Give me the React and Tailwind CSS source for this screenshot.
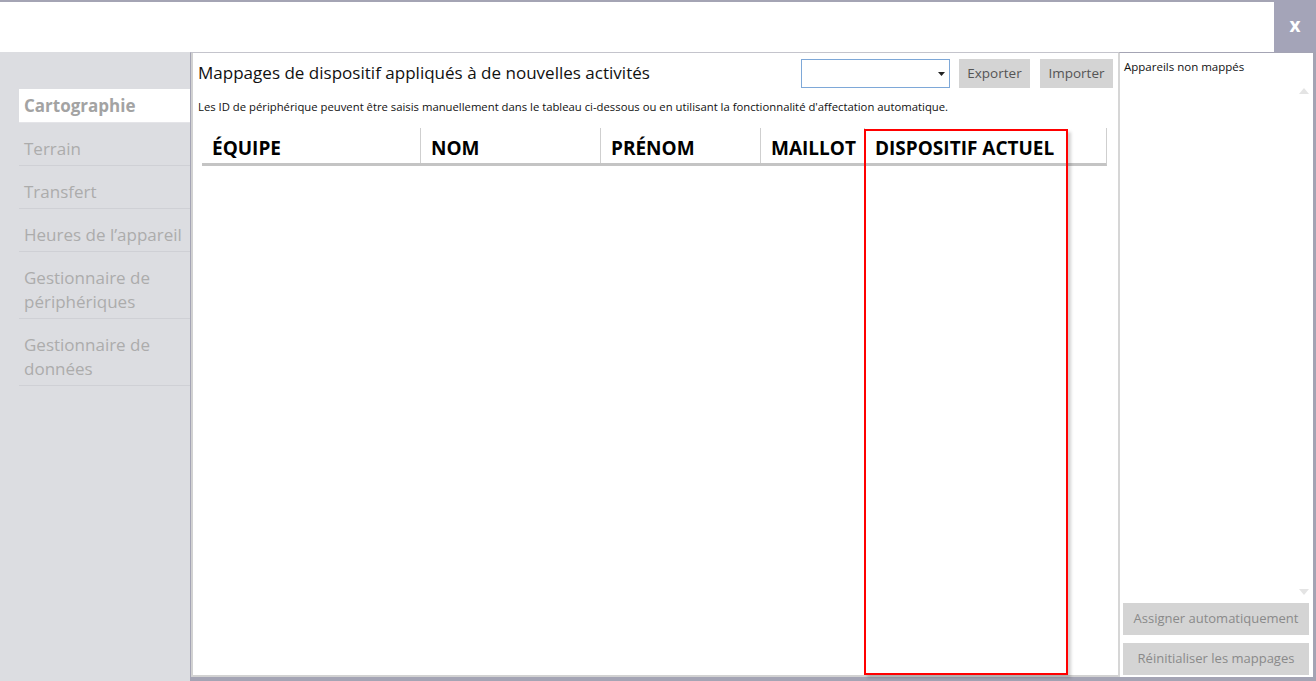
import React from "react";

const font = { fontFamily: '"Open Sans", "Noto Sans", sans-serif' };

function NavItem({ children, active }) {
  if (active) {
    return (
      <div className="bg-white h-[34px] flex items-center pl-[5px] text-[17px] font-bold text-[#a3a3a3] border-b border-[#e4e4e8]">
        {children}
      </div>
    );
  }
  return (
    <div className="pt-[14px] pb-[4px] pl-[5px] text-[17px] leading-[24px] text-[#acacac] border-b border-[#cfd0d5]">
      {children}
    </div>
  );
}

export default function App() {
  return (
    <div className="w-[1316px] h-[681px] bg-white flex flex-col overflow-hidden" style={font}>
      {/* top bar */}
      <div className="h-[52px] flex shrink-0">
        <div className="flex-1 border-t-2 border-[#a4a4b4] bg-white" />
        <div className="w-[42px] h-full bg-[#a4a4b8] flex items-center justify-center text-white font-bold text-[19px] pb-[2px]">
          x
        </div>
      </div>

      {/* body */}
      <div className="flex-1 flex min-h-0">
        {/* sidebar */}
        <div className="w-[190px] shrink-0 bg-[#dcdde1] pt-[37px] pl-[19px]">
          <NavItem active>Cartographie</NavItem>
          <NavItem>Terrain</NavItem>
          <NavItem>Transfert</NavItem>
          <NavItem>Heures de l’appareil</NavItem>
          <NavItem>
            Gestionnaire de
            <br />
            périphériques
          </NavItem>
          <NavItem>
            Gestionnaire de
            <br />
            données
          </NavItem>
        </div>

        {/* main */}
        <div className="w-[928px] shrink-0 border-l border-[#a4a4b4] border-t border-t-[#c4c4cc] flex flex-col">
          <div className="flex-1 border-l-2 border-[#d2d2d2] border-b-2 border-b-[#d2d2d2] flex flex-col pl-[5px] relative">
            {/* title row */}
            <div className="flex items-start pt-[6px] h-[36px]">
              <div className="flex-1 text-[17.05px] text-[#111] leading-[24px] pt-[2px]">
                Mappages de dispositif appliqués à de nouvelles activités
              </div>
              <div className="w-[149px] h-[29px] border border-[#7ea8d8] bg-white flex items-center justify-end pr-[4px] mr-[9px]">
                <svg width="7" height="4" viewBox="0 0 7 4">
                  <path d="M0 0 L7 0 L3.5 4 Z" fill="#222" />
                </svg>
              </div>
              <div className="w-[71px] h-[29px] bg-[#d4d4d4] flex items-center justify-center text-[13.5px] text-[#555] mr-[10px]">
                Exporter
              </div>
              <div className="w-[73px] h-[29px] bg-[#d4d4d4] flex items-center justify-center text-[13.5px] text-[#555] mr-[5px]">
                Importer
              </div>
            </div>
            {/* subtitle */}
            <div className="text-[11.3px] text-[#111] leading-[16px] mt-[10px] whitespace-nowrap">
              Les ID de périphérique peuvent être saisis manuellement dans le tableau ci-dessous ou en utilisant la fonctionnalité d'affectation automatique.
            </div>
            {/* table header */}
            <div className="mt-[13px] ml-[4px] w-[905px] flex h-[38px] border-b-[3px] border-[#c4c4c4] border-r border-r-[#cfcfcf]">
              <div className="w-[219px] border-r border-[#cfcfcf] pl-[10px] flex items-center text-[19px] font-bold text-black pt-[5px]">ÉQUIPE</div>
              <div className="w-[180px] border-r border-[#cfcfcf] pl-[10px] flex items-center text-[19px] font-bold text-black pt-[5px]">NOM</div>
              <div className="w-[160px] border-r border-[#cfcfcf] pl-[10px] flex items-center text-[19px] font-bold text-black pt-[5px]">PRÉNOM</div>
              <div className="w-[104px] border-r border-[#cfcfcf] pl-[10px] flex items-center text-[19px] font-bold text-black pt-[5px]">MAILLOT</div>
              <div className="flex-1 pl-[10px] flex items-center text-[19px] font-bold text-black pt-[5px]">DISPOSITIF ACTUEL</div>
            </div>
            {/* red highlight overlay */}
            <div className="absolute left-[671px] top-[76px] w-[204px] h-[546px] border-2 border-[#ff0000] shadow-[3px_3px_3px_rgba(0,0,0,0.18)]" />
          </div>
          <div className="h-[4px] bg-[#a4a4b4] shrink-0" />
        </div>

        {/* right panel */}
        <div className="flex-1 flex flex-col">
          <div className="flex-1 border-l-2 border-[#d6d6d6] border-r-[3px] border-r-[#a4a4b4] border-t border-t-[#a4a4b4] flex flex-col pl-[3px] pr-[4px] relative">
            <div className="text-[11.5px] text-[#111] leading-[16px] pt-[6px] pl-[1px]">Appareils non mappés</div>
            <div className="flex-1 relative">
              <svg className="absolute right-[0px] top-[13px]" width="10" height="6" viewBox="0 0 10 6">
                <path d="M0 6 L5 0 L10 6 Z" fill="#e4e4e4" />
              </svg>
              <svg className="absolute right-[0px] bottom-[8px]" width="10" height="6" viewBox="0 0 10 6">
                <path d="M0 0 L10 0 L5 6 Z" fill="#e4e4e4" />
              </svg>
            </div>
            <div className="h-[32px] bg-[#d4d4d4] flex items-center justify-center text-[13px] text-[#8a8a8a]">
              Assigner automatiquement
            </div>
            <div className="h-[32px] mt-[8px] mb-[2px] bg-[#d4d4d4] flex items-center justify-center text-[13px] text-[#8a8a8a]">
              Réinitialiser les mappages
            </div>
          </div>
          <div className="h-[4px] bg-[#a4a4b4] shrink-0" />
        </div>
      </div>
    </div>
  );
}
